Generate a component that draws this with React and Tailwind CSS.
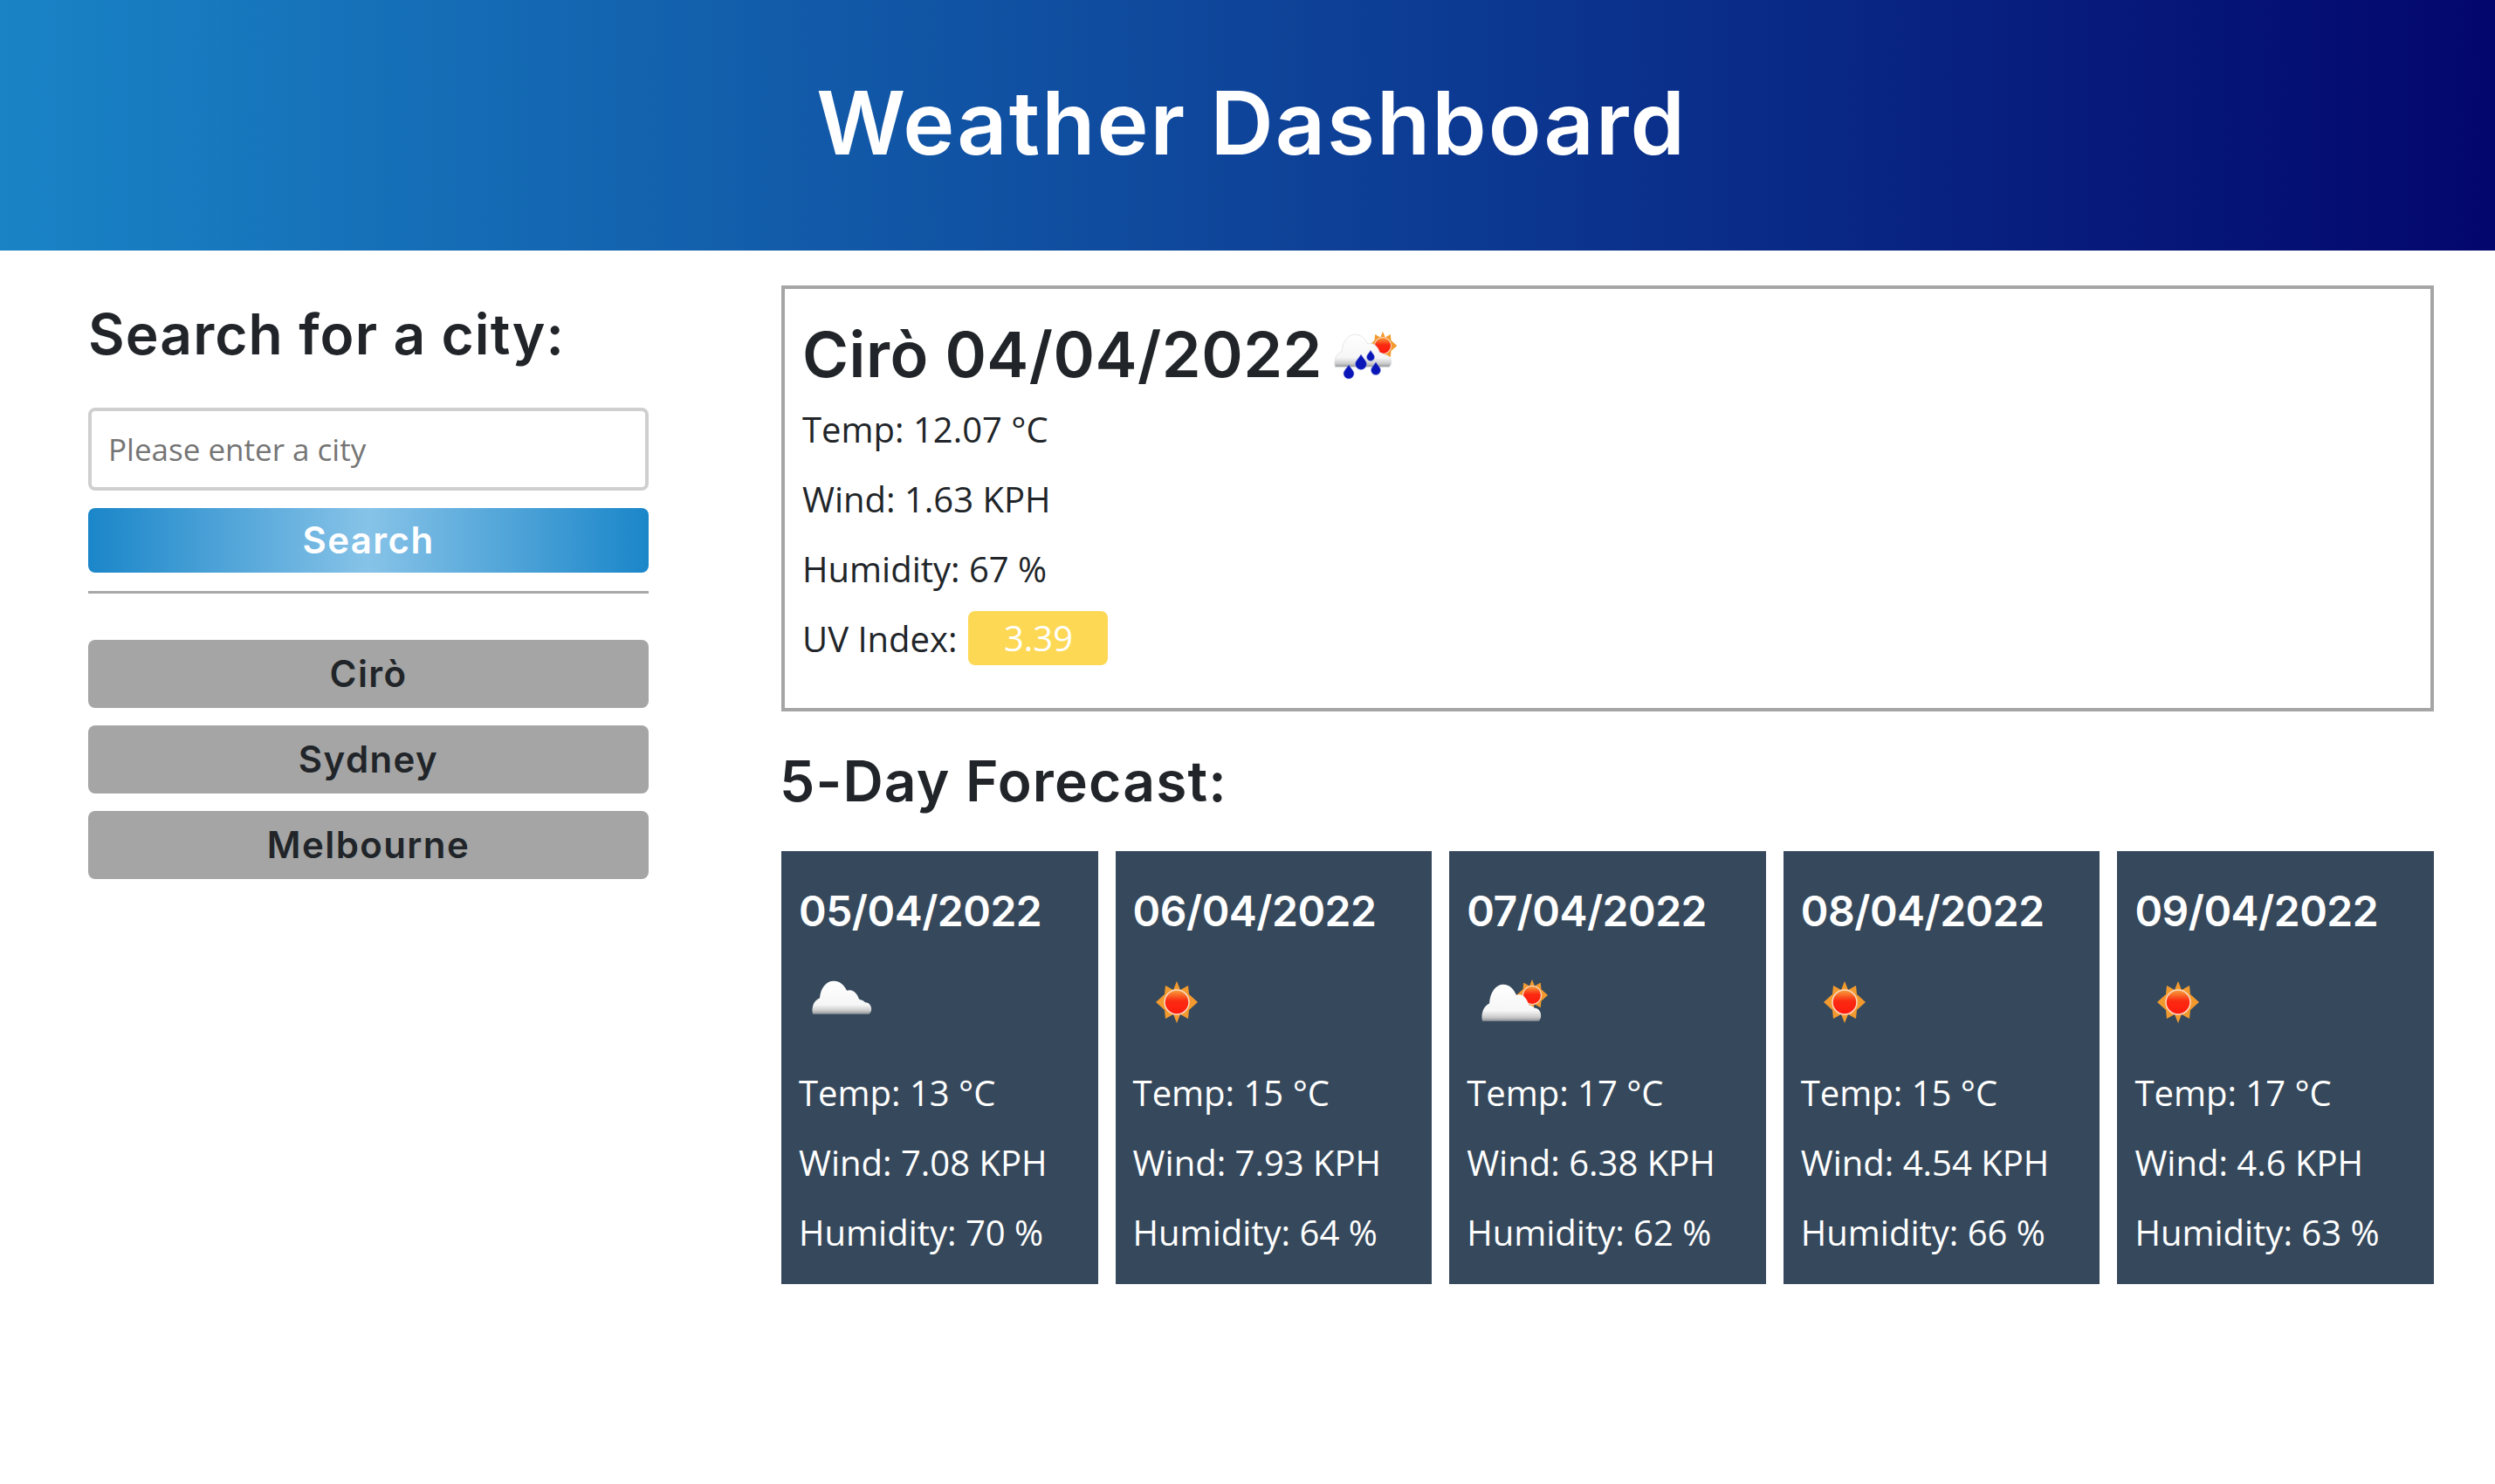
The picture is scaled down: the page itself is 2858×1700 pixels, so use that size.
import React from 'react';

const heading = { fontFamily: '"Inter", "Noto Sans", sans-serif' };

const Cloud = ({ id, outline }) => (
  <>
    <defs>
      <linearGradient id={id} x1="0" y1="0" x2="0" y2="1">
        <stop offset="0" stopColor="#ffffff" />
        <stop offset="0.72" stopColor="#f6f6f6" />
        <stop offset="0.9" stopColor="#c9c9c9" />
        <stop offset="1" stopColor="#8e9296" />
      </linearGradient>
    </defs>
    <path
      fill={`url(#${id})`}
      stroke={outline ? '#e2e2e2' : 'none'}
      strokeWidth="0.8"
      d="M17 62c-2-7 2-13 8-15 1-10 8-16 16-16 7 0 12 4 15 9 6-2 12 2 14 8 2 1 5 1 7 3 5 0 8 4 7 8-1 2-2 3-3 3z"
    />
  </>
);

const Sun = ({ id, cx = 50, cy = 50, scale = 1 }) => (
  <g transform={`translate(${cx} ${cy}) scale(${scale})`}>
    <defs>
      <linearGradient id={id} x1="0" y1="0" x2="0" y2="1">
        <stop offset="0" stopColor="#f7a23a" />
        <stop offset="0.45" stopColor="#fb2a12" />
        <stop offset="1" stopColor="#ff1a0e" />
      </linearGradient>
    </defs>
    <path
      fill="#f39a2e"
      d="M0-24 4-14 13-19 14-9 24 0 14 9 13 19 4 14 0 24-4 14-13 19-14 9-24 0-14-9-13-19-4-14z"
    />
    <circle r="14" fill={`url(#${id})`} stroke="#fbd9c2" strokeWidth="1.5" />
  </g>
);

const Drop = ({ x, y, r }) => (
  <path
    fill="#0a16b8"
    stroke="#9aa6e0"
    strokeWidth="0.5"
    d={`M${x} ${y - r * 1.7}c${r * 0.5} ${r * 0.8} ${r} ${r * 1.2} ${r} ${r * 1.7}a${r} ${r} 0 0 1-${r * 2} 0c0-${r * 0.5} ${r * 0.5}-${r * 0.9} ${r}-${r * 1.7}z`}
  />
);

const WeatherIcon = ({ type, id }) => (
  <svg viewBox="0 0 100 100" className="h-[100px] w-[100px] shrink-0">
    {type === 'cloud' && (
      <g transform="translate(-1 -13) scale(1 1.22)">
        <Cloud id={id} />
      </g>
    )}
    {type === 'sun' && <Sun id={id} cy={49} />}
    {type === 'few' && (
      <>
        <Sun id={id} cx={75} cy={41} scale={0.75} />
        <g transform="translate(1 -13) scale(1 1.35)">
          <Cloud id={`${id}c`} />
        </g>
      </>
    )}
    {type === 'rain' && (
      <>
        <Sun id={id} cx={69} cy={40} scale={0.68} />
        <g transform="translate(-2 -10) scale(0.96 1.2)">
          <Cloud id={`${id}c`} outline />
        </g>
        <Drop x={55} y={53} r={4.5} />
        <Drop x={44} y={61} r={6.5} />
        <Drop x={30} y={72} r={6} />
        <Drop x={61} y={68} r={5.5} />
      </>
    )}
  </svg>
);

const forecast = [
  { date: '05/04/2022', icon: 'cloud', temp: '13', wind: '7.08', humidity: '70' },
  { date: '06/04/2022', icon: 'sun', temp: '15', wind: '7.93', humidity: '64' },
  { date: '07/04/2022', icon: 'few', temp: '17', wind: '6.38', humidity: '62' },
  { date: '08/04/2022', icon: 'sun', temp: '15', wind: '4.54', humidity: '66' },
  { date: '09/04/2022', icon: 'sun', temp: '17', wind: '4.6', humidity: '63' },
];

const cities = ['Cirò', 'Sydney', 'Melbourne'];

const App = () => {
  return (
    <div className="min-h-[1700px] bg-white text-[#212529]" style={{ fontFamily: '"Open Sans", sans-serif' }}>
      <header className="flex h-[287px] items-center justify-center bg-[linear-gradient(to_right,#1983c6,#03066d)] pb-[6px] pl-[9px]">
        <h1 style={heading} className="text-[100px] font-semibold leading-none tracking-[2px] text-white">
          Weather Dashboard
        </h1>
      </header>

      <main className="flex pl-[101px] pr-[70px]">
        <aside className="w-[642px] shrink-0 pt-[59px]">
          <h2 style={heading} className="-mt-[1px] text-[64px] font-semibold leading-[1.2] tracking-[1.1px]">Search for a city:</h2>
          <input
            placeholder="Please enter a city"
            className="mt-[45px] block h-[95px] w-full rounded-[8px] border-[4px] border-[#cfcfcf] bg-white px-[19px] text-[35px] placeholder:text-[#757575]"
          />
          <button
            style={heading}
            className="mt-[20px] block h-[74px] w-full rounded-[8px] bg-[linear-gradient(to_right,#1a86c9,#87c3e8,#1a86c9)] text-[42px] font-semibold tracking-[1.4px] text-white"
          >
            Search
          </button>
          <hr className="mt-[21px] border-t-[3px] border-[#a8a8a8]" />
          <div className="mt-[53px] flex flex-col gap-[20px]">
            {cities.map(city => (
              <button
                key={city}
                style={heading}
                className="h-[78px] w-full rounded-[8px] bg-[#a5a5a5] text-[42px] font-semibold tracking-[1.4px] text-[#212529]"
              >
                {city}
              </button>
            ))}
          </div>
        </aside>

        <section className="ml-[152px] flex-1 pt-[40px]">
          <div className="h-[488px] border-[4px] border-[#a5a5a5] px-[20px] pt-[27px]">
            <div className="flex h-[96px] items-center">
              <h2 style={heading} className="text-[72px] font-semibold leading-none tracking-[0.5px]">Cirò 04/04/2022</h2>
              <WeatherIcon type="rain" id="today" />
            </div>
            <div className="mt-[14px] flex flex-col gap-[32px] text-[40px] leading-[48px]">
              <p>Temp: 12.07 °C</p>
              <p>Wind: 1.63 KPH</p>
              <p>Humidity: 67 %</p>
              <div className="flex h-[48px] items-center gap-[13px]">
                <span>UV Index:</span>
                <span className="-mt-[3px] h-[62px] w-[160px] shrink-0 rounded-[8px] bg-[#fdd855] text-center leading-[62px] text-white">3.39</span>
              </div>
            </div>
          </div>

          <h3 style={heading} className="-ml-[2px] mt-[48px] h-[64px] text-[64px] font-semibold leading-none tracking-[1.2px]">5-Day Forecast:</h3>

          <div className="mt-[48px] grid grid-cols-5 gap-[20px]">
            {forecast.map(day => (
              <div key={day.date} className="h-[496px] bg-[#36495c] px-[20px] pt-[39px] text-white">
                <h4 style={heading} className="h-[60px] text-[48px] font-semibold leading-[60px] tracking-[-0.5px]">{day.date}</h4>
                <div className="mt-[25px]">
                  <WeatherIcon type={day.icon} id={`d${day.date.slice(0, 2)}`} />
                </div>
                <div className="mt-[29px] flex flex-col gap-[32px] text-[40px] leading-[48px]">
                  <p>Temp: {day.temp} °C</p>
                  <p>Wind: {day.wind} KPH</p>
                  <p>Humidity: {day.humidity} %</p>
                </div>
              </div>
            ))}
          </div>
        </section>
      </main>
    </div>
  );
};

export default App;
